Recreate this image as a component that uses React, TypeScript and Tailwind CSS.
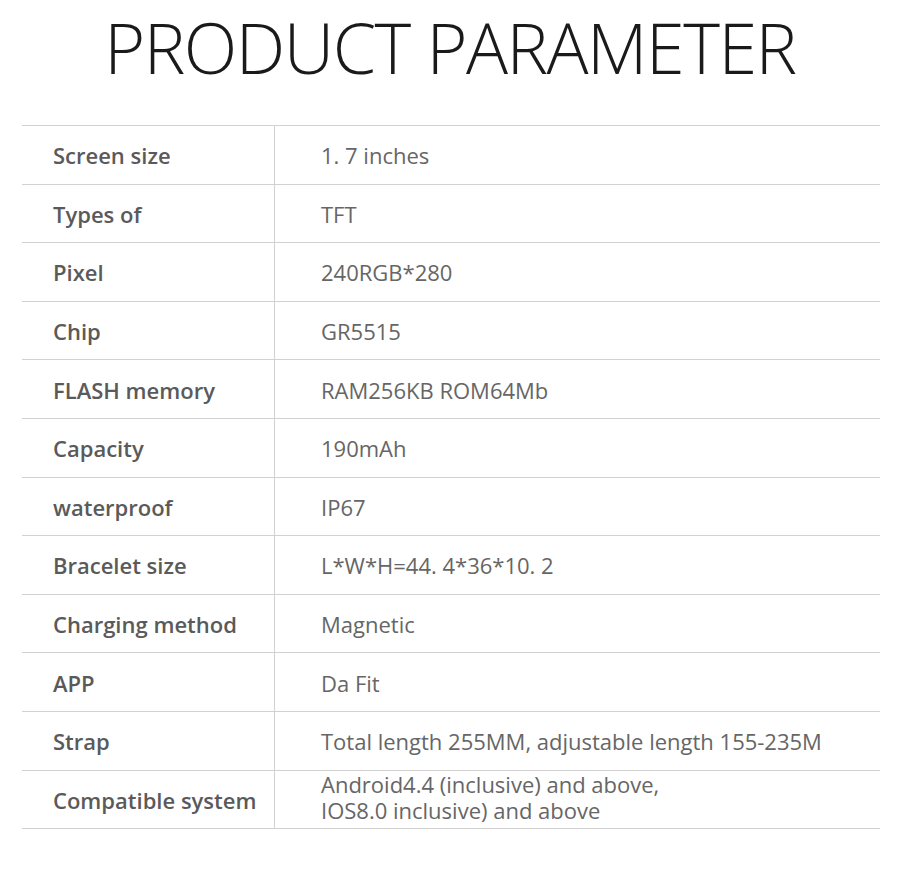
import React from "react";

const rows: [string, string[]][] = [
  ["Screen size", ["1. 7 inches"]],
  ["Types of", ["TFT"]],
  ["Pixel", ["240RGB*280"]],
  ["Chip", ["GR5515"]],
  ["FLASH memory", ["RAM256KB ROM64Mb"]],
  ["Capacity", ["190mAh"]],
  ["waterproof", ["IP67"]],
  ["Bracelet size", ["L*W*H=44. 4*36*10. 2"]],
  ["Charging method", ["Magnetic"]],
  ["APP", ["Da Fit"]],
  ["Strap", ["Total length 255MM, adjustable length 155-235M"]],
  ["Compatible system", ["Android4.4 (inclusive) and above,", "IOS8.0 inclusive) and above"]],
];

export default function App() {
  return (
    <div
      className="w-[900px] h-[880px] bg-white overflow-hidden"
      style={{ fontFamily: '"Open Sans", "Noto Sans", sans-serif' }}
    >
      <div className="h-[125px] flex justify-center">
        <h1 className="mt-[-1px] text-[70px] leading-[96px] font-light text-[#1a1a1a] tracking-[-1.5px] whitespace-nowrap">
          PRODUCT PARAMETER
        </h1>
      </div>
      <div className="mx-[22px] w-[858px] border-t border-[#d2d2d2]">
        {rows.map(([label, vals]) => (
          <div key={label} className="flex h-[58.6px] border-b border-[#d2d2d2]">
            <div className="w-[253px] border-r border-[#d2d2d2] flex items-center pl-[31px] pt-[2px] text-[22px] font-semibold text-[#5a5a5a]">
              {label}
            </div>
            <div
              className={
                vals.length > 1
                  ? "flex-1 flex flex-col justify-center pl-[46px] pb-[4px] text-[22px] leading-[26px] text-[#666666]"
                  : "flex-1 flex flex-col justify-center pl-[46px] pt-[1px] text-[22px] leading-[26px] text-[#666666]"
              }
            >
              {vals.map((v) => (
                <div key={v} className="whitespace-nowrap">{v}</div>
              ))}
            </div>
          </div>
        ))}
      </div>
    </div>
  );
}
